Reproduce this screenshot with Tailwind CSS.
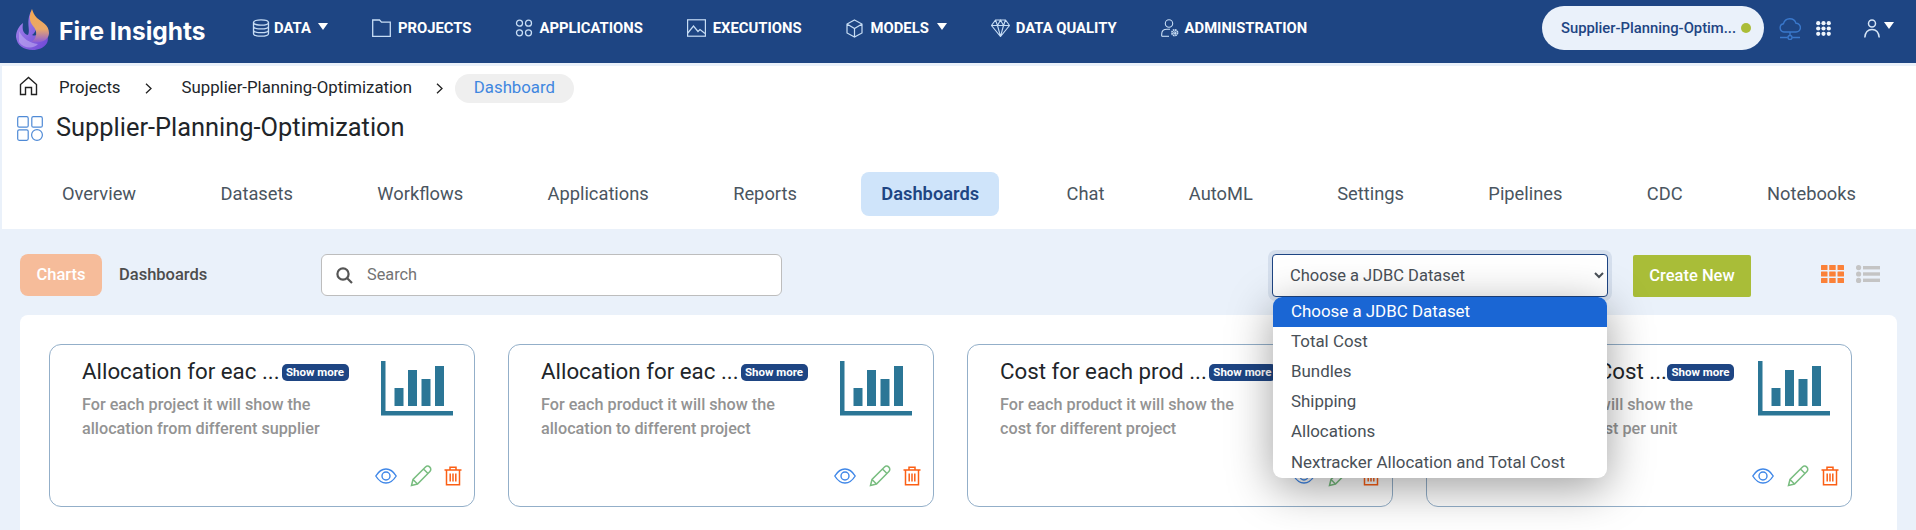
<!DOCTYPE html>
<html lang="en">
<head>
<meta charset="utf-8">
<title>Fire Insights</title>
<script src="https://cdn.jsdelivr.net/npm/@tailwindcss/browser@4"></script>
</head>
<body class="h-[530px] w-[1916px] overflow-hidden bg-[#eaf1fa] font-[family-name:Roboto,sans-serif] text-[#212529]">

<header class="flex h-[63px] items-center bg-[#1e4583] text-white">
  <div class="flex w-[252px] shrink-0 items-center pl-4">
    <svg width="34" height="42" viewBox="0 0 34 42" class="-mt-[3px] shrink-0">
      <defs>
        <linearGradient id="lg1" x1="0" y1="0" x2="0" y2="1"><stop offset="0" stop-color="#f4a94e"/><stop offset=".6" stop-color="#e9a86a"/><stop offset="1" stop-color="#8a5bd8"/></linearGradient>
        <linearGradient id="lg2" x1="0" y1="0" x2="1" y2="1"><stop offset="0" stop-color="#a98cee"/><stop offset="1" stop-color="#6d45d6"/></linearGradient>
      </defs>
      <path d="M16 0 C13 7 18 12 20 16 C21 20 19 24 16 26 C21 28 24 24 26 19 C32 24 33 30 31 34 C28 39 22 41 17 41 C7 41 1 36 0 28 C0 22 3 17 7 14 C6 20 7 25 12 26 C15 21 9 13 16 0 Z" fill="url(#lg2)"/>
      <path d="M16 0 C13 7 13 12 17 17 C22 22 21 30 15 33 C25 35 33 31 33 24 C33 16 26 13 21 9 C18 6 17 3 16 0 Z" fill="url(#lg1)"/>
      <path d="M3 22 C7 30 14 34 22 35 C18 40 8 40 3 33 Z" fill="#c4b2f2" opacity=".55"/>
    </svg>
    <span class="ml-[9px] font-[family-name:Inter,sans-serif] text-[24.5px] leading-none font-bold">Fire Insights</span>
  </div>

  <nav class="-mt-[7px] flex items-center gap-[44px] text-[14.8px] font-bold text-white">
    <a class="flex items-center">
      <svg width="18" height="18" viewBox="0 0 18 18" fill="none" stroke="#c7ddf5" stroke-width="1.3"><ellipse cx="9" cy="3.5" rx="7.5" ry="2.7"/><path d="M1.5 3.5V14.5C1.5 16 4.8 17.2 9 17.2S16.5 16 16.5 14.5V3.5M1.5 7.2C1.5 8.7 4.8 9.9 9 9.9S16.5 8.7 16.5 7.2M1.5 10.9C1.500 12.4 4.8 13.6 9 13.6S16.5 12.4 16.5 10.9"/></svg>
      <span class="ml-[4px] w-[37px]">DATA</span>
      <svg width="10" height="7" viewBox="0 0 10 7" class="-mt-[4px] ml-[7px]"><path d="M0 0H10L5 7Z" fill="#fff"/></svg>
    </a>
    <a class="flex items-center">
      <svg width="19" height="18" viewBox="0 0 19 18" fill="none" stroke="#c7ddf5" stroke-width="1.3"><path d="M.7 17.3V1H7.5L9.5 3.2H18.3V17.3Z"/></svg>
      <span class="ml-[7px]">PROJECTS</span>
    </a>
    <a class="flex items-center">
      <svg width="18" height="18" viewBox="0 0 18 18" fill="none" stroke="#c7ddf5" stroke-width="1.3"><circle cx="4.5" cy="4.2" r="3"/><circle cx="13.5" cy="4.2" r="3"/><circle cx="4.5" cy="13.8" r="3"/><circle cx="13.5" cy="13.8" r="3"/></svg>
      <span class="ml-[6px]">APPLICATIONS</span>
    </a>
    <a class="flex items-center">
      <svg width="19" height="18" viewBox="0 0 19 18" fill="none" stroke="#c7ddf5" stroke-width="1.2"><rect x=".6" y=".8" width="17.8" height="16.4"/><path d="M.8 14L6.5 7L11 12.5L13 10.5L18 14.5"/></svg>
      <span class="ml-[7px]">EXECUTIONS</span>
    </a>
    <a class="flex items-center">
      <svg width="17" height="19" viewBox="0 0 17 19" fill="none" stroke="#c7ddf5" stroke-width="1.2"><path d="M8.5 1L16 5V14L8.5 18L1 14V5ZM1 5L8.5 9.5L16 5M8.5 9.5V18"/></svg>
      <span class="ml-[8px]">MODELS</span>
      <svg width="10" height="7" viewBox="0 0 10 7" class="-mt-[4px] ml-[8px]"><path d="M0 0H10L5 7Z" fill="#fff"/></svg>
    </a>
    <a class="flex items-center">
      <svg width="19" height="18" viewBox="0 0 19 18" fill="none" stroke="#c7ddf5" stroke-width="1.1"><path d="M4.5 1H14.5L18.5 6.5L9.5 17.5L.5 6.5ZM.5 6.5H18.5M6.5 6.5L9.5 17.5L12.5 6.5M6.5 6.5L9.5 1L12.5 6.5M4.5 1L6.5 6.5M14.5 1L12.5 6.5"/></svg>
      <span class="ml-[6px]">DATA QUALITY</span>
    </a>
    <a class="flex items-center">
      <svg width="18" height="18" viewBox="0 0 18 18" fill="none" stroke="#c7ddf5" stroke-width="1.1"><circle cx="8" cy="4.5" r="3.7"/><path d="M.7 17.3V15C.7 12 3 10.2 6 10.2H9"/><path d="M.7 17.3H8"/><circle cx="13.7" cy="13.7" r="2.8" stroke-width="1.8" stroke-dasharray="1.6 .6"/><circle cx="13.7" cy="13.7" r="1"/></svg>
      <span class="ml-[6px]">ADMINISTRATION</span>
    </a>
  </nav>

  <div class="-mt-[7px] ml-auto flex items-center">
    <div class="flex h-[44px] w-[222px] items-center rounded-[22px] bg-[#eaf1fa] pr-[13px] pl-[19px] text-[14.8px] font-medium text-[#1e4583]">
      <span class="w-[178px] whitespace-nowrap">Supplier-Planning-Optim...</span>
      <span class="ml-auto h-[10px] w-[10px] rounded-full bg-[#abbd37]"></span>
    </div>
    <svg width="22" height="23" viewBox="0 0 22 23" fill="none" stroke="#3a78cb" stroke-width="1.4" class="ml-[15px]"><path d="M6 15H5A4.2 4.2 0 0 1 4.5 6.7A6.5 6.5 0 0 1 17 6.2A4.4 4.4 0 0 1 17 15H6Z"/><path d="M11 15V19M1 20.5H8.8M13.2 20.5H21"/><circle cx="11" cy="20.5" r="2"/></svg>
    <svg width="15" height="15" viewBox="0 0 15 15" fill="#eef4fb" class="ml-[15px]"><circle cx="2.2" cy="2.2" r="2.1"/><circle cx="7.5" cy="2.2" r="2.1"/><circle cx="12.8" cy="2.2" r="2.1"/><circle cx="2.2" cy="7.5" r="2.1"/><circle cx="7.5" cy="7.5" r="2.1"/><circle cx="12.8" cy="7.5" r="2.1"/><circle cx="2.2" cy="12.8" r="2.1"/><circle cx="7.5" cy="12.8" r="2.1"/><circle cx="12.8" cy="12.8" r="2.1"/></svg>
    <svg width="16" height="19" viewBox="0 0 16 19" fill="none" stroke="#d6e5f6" stroke-width="1.5" class="ml-[33px]"><circle cx="8" cy="4.5" r="3.5"/><path d="M.8 18.5C1.3 13 4 10.5 8 10.5S14.7 13 15.2 18.5"/></svg>
    <svg width="10" height="7" viewBox="0 0 10 7" class="mt-[-5px] mr-[22px] ml-[4px]"><path d="M0 0H10L5 7Z" fill="#fff"/></svg>
  </div>
</header>

<section class="mt-[3px] ml-[2px] h-[163px] bg-white">
  <div class="flex h-[43px] items-center pt-[1px] text-[16.8px]">
    <svg width="19" height="20" viewBox="0 0 19 20" fill="none" stroke="#222" stroke-width="1.4" class="mb-[5px] ml-[17px]"><path d="M1.5 18.5V8.5L9.5 1.5L17.5 8.5V18.5H12.5V11.5H6.5V18.5Z"/></svg>
    <span class="ml-[21px]">Projects</span>
    <svg width="7" height="11" viewBox="0 0 7 11" fill="none" stroke="#222" stroke-width="1.3" class="ml-[24px]"><path d="M1 .7L6 5.5L1 10.3"/></svg>
    <span class="ml-[30px]">Supplier-Planning-Optimization</span>
    <svg width="7" height="11" viewBox="0 0 7 11" fill="none" stroke="#222" stroke-width="1.3" class="ml-[24px]"><path d="M1 .7L6 5.5L1 10.3"/></svg>
    <span class="ml-[12px] flex h-[29px] w-[119px] items-center justify-center rounded-[15px] bg-[#efefef] text-[#3f87e0]">Dashboard</span>
  </div>
  <div class="mt-[2px] flex h-[34px] items-center">
    <svg width="26" height="25" viewBox="0 0 26 25" fill="none" stroke="#4f8ad6" stroke-width="1.2" class="ml-[15px]"><rect x=".7" y=".7" width="10.5" height="10.5" rx="1.5"/><rect x="14.8" y=".7" width="10.5" height="10.5" rx="1.5"/><rect x=".7" y="13.8" width="10.5" height="10.5" rx="1.5"/><circle cx="20" cy="19" r="5.4"/></svg>
    <h1 class="ml-[13px] text-[25.4px] leading-none font-normal">Supplier-Planning-Optimization</h1>
  </div>
  <nav class="mt-[27px] flex h-[44px] items-center justify-between pr-[40px] pl-[40px] text-[18.3px] text-[#4a5560]">
    <a class="px-5">Overview</a>
    <a class="px-5">Datasets</a>
    <a class="px-5">Workflows</a>
    <a class="px-5">Applications</a>
    <a class="px-5">Reports</a>
    <a class="mr-[3px] flex h-[44px] items-center rounded-lg bg-[#cfe4fa] px-5 font-semibold text-[#1e4583]">Dashboards</a>
    <a class="px-5">Chat</a>
    <a class="px-5">AutoML</a>
    <a class="px-5">Settings</a>
    <a class="px-5">Pipelines</a>
    <a class="px-5">CDC</a>
    <a class="px-5">Notebooks</a>
  </nav>
</section>

<div class="relative flex h-[86px] items-start pt-[25px] pl-[20px] text-[16.5px]">
  <button class="h-[42px] w-[82px] rounded-lg bg-[#f6bc9a] font-medium text-white">Charts</button>
  <span class="ml-[17px] flex h-[42px] w-[88px] items-center font-medium whitespace-nowrap text-[#4d4d4d]">Dashboards</span>
  <div class="ml-[114px] flex h-[42px] w-[461px] items-center rounded-md border border-[#bdbdbd] bg-white">
    <svg width="17" height="17" viewBox="0 0 17 17" fill="none" stroke="#555" stroke-width="2.2" class="ml-[14px]"><circle cx="7" cy="7" r="5.6"/><path d="M11 11L16 16"/></svg>
    <span class="ml-[14px] text-[16.3px] text-[#737373]">Search</span>
  </div>
  <div class="relative ml-[490px]">
    <select class="h-[43px] w-[336px] rounded-[4px] border border-[#1e4583] bg-white pl-[13px] text-[16.5px] text-[#495057] shadow-[0_0_0_4px_rgba(30,69,131,0.1)]">
      <option>Choose a JDBC Dataset</option>
    </select>
    <ul class="absolute top-[43px] left-[1px] z-10 w-[334px] overflow-hidden rounded-[9px] bg-white text-[16.9px] text-[#495057] shadow-[0_10px_45px_rgba(0,0,0,0.38)]">
      <li class="flex h-[30px] items-center bg-[#1a66d4] pl-[18px] text-white">Choose a JDBC Dataset</li>
      <li class="flex h-[30px] items-center pl-[18px]">Total Cost</li>
      <li class="flex h-[30px] items-center pl-[18px]">Bundles</li>
      <li class="flex h-[30px] items-center pl-[18px]">Shipping</li>
      <li class="flex h-[30px] items-center pl-[18px]">Allocations</li>
      <li class="flex h-[31px] items-center pl-[18px]">Nextracker Allocation and Total Cost</li>
    </ul>
  </div>
  <button class="mt-[1px] ml-[25px] h-[42px] w-[118px] rounded-[2px] bg-[#a9bd38] font-medium text-white">Create New</button>
  <svg width="23" height="18" viewBox="0 0 23 18" fill="#fb8138" class="mt-[11px] ml-[70px]"><rect width="6.5" height="5" rx=".5"/><rect x="8.2" width="6.5" height="5" rx=".5"/><rect x="16.5" width="6.5" height="5" rx=".5"/><rect y="6.5" width="6.5" height="5" rx=".5"/><rect x="8.2" y="6.5" width="6.5" height="5" rx=".5"/><rect x="16.5" y="6.5" width="6.5" height="5" rx=".5"/><rect y="13" width="6.5" height="5" rx=".5"/><rect x="8.2" y="13" width="6.5" height="5" rx=".5"/><rect x="16.5" y="13" width="6.5" height="5" rx=".5"/></svg>
  <svg width="24" height="18" viewBox="0 0 24 18" fill="#c4c4c4" class="mt-[11px] ml-[12px]"><circle cx="2.6" cy="2.6" r="2.6"/><circle cx="2.6" cy="9" r="2.6"/><circle cx="2.6" cy="15.4" r="2.6"/><rect x="7" y="1" width="17" height="3.4"/><rect x="7" y="7.3" width="17" height="3.4"/><rect x="7" y="13.6" width="17" height="3.4"/></svg>
</div>

<main class="mr-[19px] ml-[20px] grid h-[300px] grid-cols-[repeat(4,426px)] gap-x-[33px] rounded-t-lg bg-white px-[29px] pt-[29px]">

  <article class="relative h-[163px] rounded-xl border border-[#93afc9] bg-white pt-[11px] pl-[32px]">
    <div class="flex items-center">
      <span class="text-[22.3px] leading-[30px] whitespace-nowrap">Allocation for eac ...</span>
      <span class="mt-[3px] ml-[2px] flex h-[17px] w-[67px] items-center justify-center rounded-[5px] bg-[#1e4583] text-[11.5px] font-bold whitespace-nowrap text-white">Show more</span>
    </div>
    <p class="mt-[7px] w-[250px] text-[16.2px] leading-[24px] font-medium text-[#939393]">For each project it will show the allocation from different supplier</p>
    <svg width="72" height="55" viewBox="0 0 72 55" fill="#2b7696" class="absolute top-[16px] left-[331px]"><path d="M0 0H4.5V50H72V54.5H0Z"/><rect x="13.5" y="27" width="9" height="18"/><rect x="27" y="9" width="9" height="36"/><rect x="40.5" y="18" width="9" height="27"/><rect x="54" y="5" width="9" height="40"/></svg>
    <div class="absolute right-[12px] bottom-[19px] flex items-center">
      <svg width="22" height="16" viewBox="0 0 22 16" fill="none" stroke="#3f87e8" stroke-width="1.4"><path d="M.8 8C4 2.8 7.5 1 11 1S18 2.8 21.2 8C18 13.2 14.500 15 11 15S4 13.2.8 8Z"/><circle cx="11" cy="8" r="4"/></svg>
      <svg width="22" height="22" viewBox="0 0 22 22" fill="none" stroke="#79bd80" stroke-width="1.5" class="ml-[13px]"><path d="M1.500 20.500L3 14.500L15.500 2C16.700 .8 18.500 .8 19.800 2.100C21.100 3.400 21.100 5.300 19.900 6.500L7.500 19ZM3 14.500L7.500 19M13.500 4L18 8.500"/></svg>
      <svg width="18" height="20" viewBox="0 0 18 20" fill="none" stroke="#fb5f14" stroke-width="1.500" class="ml-[12px]"><path d="M.5 4H17.500M6 4V1.200H12V4M2.500 4V18.800H15.500V4M6.200 7.500V15.500M9 7.500V15.500M11.800 7.500V15.500"/></svg>
    </div>
  </article>

  <article class="relative h-[163px] rounded-xl border border-[#93afc9] bg-white pt-[11px] pl-[32px]">
    <div class="flex items-center">
      <span class="text-[22.3px] leading-[30px] whitespace-nowrap">Allocation for eac ...</span>
      <span class="mt-[3px] ml-[2px] flex h-[17px] w-[67px] items-center justify-center rounded-[5px] bg-[#1e4583] text-[11.5px] font-bold whitespace-nowrap text-white">Show more</span>
    </div>
    <p class="mt-[7px] w-[250px] text-[16.2px] leading-[24px] font-medium text-[#939393]">For each product it will show the allocation to different project</p>
    <svg width="72" height="55" viewBox="0 0 72 55" fill="#2b7696" class="absolute top-[16px] left-[331px]"><path d="M0 0H4.5V50H72V54.5H0Z"/><rect x="13.5" y="27" width="9" height="18"/><rect x="27" y="9" width="9" height="36"/><rect x="40.5" y="18" width="9" height="27"/><rect x="54" y="5" width="9" height="40"/></svg>
    <div class="absolute right-[12px] bottom-[19px] flex items-center">
      <svg width="22" height="16" viewBox="0 0 22 16" fill="none" stroke="#3f87e8" stroke-width="1.4"><path d="M.8 8C4 2.8 7.5 1 11 1S18 2.8 21.2 8C18 13.2 14.500 15 11 15S4 13.2.8 8Z"/><circle cx="11" cy="8" r="4"/></svg>
      <svg width="22" height="22" viewBox="0 0 22 22" fill="none" stroke="#79bd80" stroke-width="1.5" class="ml-[13px]"><path d="M1.500 20.500L3 14.500L15.500 2C16.700 .8 18.500 .8 19.800 2.100C21.100 3.400 21.100 5.300 19.900 6.500L7.500 19ZM3 14.500L7.500 19M13.500 4L18 8.500"/></svg>
      <svg width="18" height="20" viewBox="0 0 18 20" fill="none" stroke="#fb5f14" stroke-width="1.500" class="ml-[12px]"><path d="M.5 4H17.500M6 4V1.200H12V4M2.500 4V18.800H15.500V4M6.200 7.500V15.500M9 7.500V15.500M11.800 7.500V15.500"/></svg>
    </div>
  </article>

  <article class="relative h-[163px] rounded-xl border border-[#93afc9] bg-white pt-[11px] pl-[32px]">
    <div class="flex items-center">
      <span class="text-[22.3px] leading-[30px] whitespace-nowrap">Cost for each prod ...</span>
      <span class="mt-[3px] ml-[2px] flex h-[17px] w-[67px] items-center justify-center rounded-[5px] bg-[#1e4583] text-[11.5px] font-bold whitespace-nowrap text-white">Show more</span>
    </div>
    <p class="mt-[7px] w-[250px] text-[16.2px] leading-[24px] font-medium text-[#939393]">For each product it will show the cost for different project</p>
    <svg width="72" height="55" viewBox="0 0 72 55" fill="#2b7696" class="absolute top-[16px] left-[331px]"><path d="M0 0H4.5V50H72V54.5H0Z"/><rect x="13.5" y="27" width="9" height="18"/><rect x="27" y="9" width="9" height="36"/><rect x="40.5" y="18" width="9" height="27"/><rect x="54" y="5" width="9" height="40"/></svg>
    <div class="absolute right-[12px] bottom-[19px] flex items-center">
      <svg width="22" height="16" viewBox="0 0 22 16" fill="none" stroke="#3f87e8" stroke-width="1.4"><path d="M.8 8C4 2.8 7.5 1 11 1S18 2.8 21.2 8C18 13.2 14.500 15 11 15S4 13.2.8 8Z"/><circle cx="11" cy="8" r="4"/></svg>
      <svg width="22" height="22" viewBox="0 0 22 22" fill="none" stroke="#79bd80" stroke-width="1.5" class="ml-[13px]"><path d="M1.500 20.500L3 14.500L15.500 2C16.700 .8 18.500 .8 19.800 2.100C21.100 3.400 21.100 5.300 19.900 6.500L7.500 19ZM3 14.500L7.500 19M13.500 4L18 8.500"/></svg>
      <svg width="18" height="20" viewBox="0 0 18 20" fill="none" stroke="#fb5f14" stroke-width="1.500" class="ml-[12px]"><path d="M.5 4H17.500M6 4V1.200H12V4M2.500 4V18.800H15.500V4M6.200 7.500V15.500M9 7.500V15.500M11.800 7.500V15.500"/></svg>
    </div>
  </article>

  <article class="relative h-[163px] rounded-xl border border-[#93afc9] bg-white pt-[11px] pl-[32px]">
    <div class="flex items-center">
      <span class="w-[206px] text-right text-[22.3px] leading-[30px] whitespace-nowrap">Total Product Cost ...</span>
      <span class="mt-[3px] ml-[2px] flex h-[17px] w-[67px] items-center justify-center rounded-[5px] bg-[#1e4583] text-[11.5px] font-bold whitespace-nowrap text-white">Show more</span>
    </div>
    <p class="mt-[7px] w-[250px] text-[16.2px] leading-[24px] font-medium text-[#939393]">For each product it will show the different supplier cost per unit</p>
    <svg width="72" height="55" viewBox="0 0 72 55" fill="#2b7696" class="absolute top-[16px] left-[331px]"><path d="M0 0H4.5V50H72V54.5H0Z"/><rect x="13.5" y="27" width="9" height="18"/><rect x="27" y="9" width="9" height="36"/><rect x="40.5" y="18" width="9" height="27"/><rect x="54" y="5" width="9" height="40"/></svg>
    <div class="absolute right-[12px] bottom-[19px] flex items-center">
      <svg width="22" height="16" viewBox="0 0 22 16" fill="none" stroke="#3f87e8" stroke-width="1.4"><path d="M.8 8C4 2.8 7.5 1 11 1S18 2.8 21.2 8C18 13.2 14.500 15 11 15S4 13.2.8 8Z"/><circle cx="11" cy="8" r="4"/></svg>
      <svg width="22" height="22" viewBox="0 0 22 22" fill="none" stroke="#79bd80" stroke-width="1.5" class="ml-[13px]"><path d="M1.500 20.500L3 14.500L15.500 2C16.700 .8 18.500 .8 19.800 2.100C21.100 3.400 21.100 5.300 19.900 6.500L7.500 19ZM3 14.500L7.500 19M13.500 4L18 8.500"/></svg>
      <svg width="18" height="20" viewBox="0 0 18 20" fill="none" stroke="#fb5f14" stroke-width="1.500" class="ml-[12px]"><path d="M.5 4H17.500M6 4V1.200H12V4M2.500 4V18.800H15.500V4M6.200 7.500V15.500M9 7.500V15.500M11.800 7.500V15.500"/></svg>
    </div>
  </article>
</main>
</body>
</html>
